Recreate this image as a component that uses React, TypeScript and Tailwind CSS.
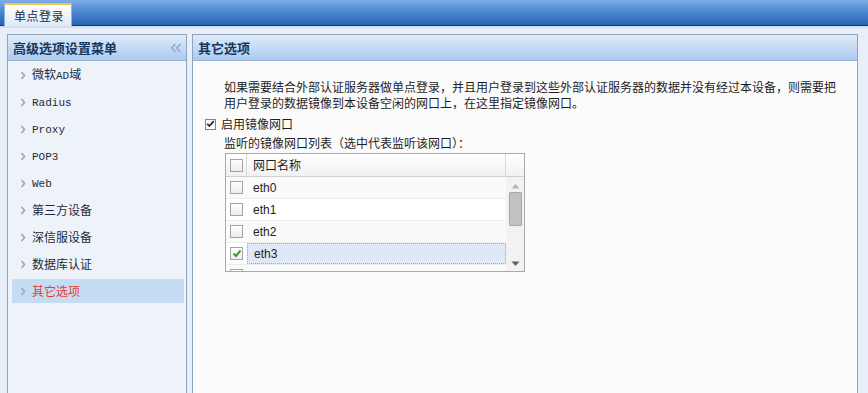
import React from "react";

const cjk = "font-['Noto_Sans_CJK_SC','Noto_Sans',sans-serif]";
const mono = "font-['Liberation_Mono','Noto_Sans_CJK_SC',monospace] text-[11px]";

type MenuItem = { parts: { t: string; latin?: boolean }[]; active?: boolean };

const menu: MenuItem[] = [
  { parts: [{ t: "微软" }, { t: "AD", latin: true }, { t: "域" }] },
  { parts: [{ t: "Radius", latin: true }] },
  { parts: [{ t: "Proxy", latin: true }] },
  { parts: [{ t: "POP3", latin: true }] },
  { parts: [{ t: "Web", latin: true }] },
  { parts: [{ t: "第三方设备" }] },
  { parts: [{ t: "深信服设备" }] },
  { parts: [{ t: "数据库认证" }] },
  { parts: [{ t: "其它选项" }], active: true },
];

const ports = [
  { name: "eth0", checked: false },
  { name: "eth1", checked: false },
  { name: "eth2", checked: false },
  { name: "eth3", checked: true },
  { name: "eth4", checked: false },
];

function Chevron() {
  return (
    <svg width="6" height="9" viewBox="0 0 6 9" className="shrink-0">
      <path d="M1.5 1 L4.5 4.5 L1.5 8" fill="none" stroke="#9aa5b3" strokeWidth="1.6" />
    </svg>
  );
}

function GridCheck({ checked }: { checked: boolean }) {
  return (
    <span className="flex h-[13px] w-[13px] items-center justify-center border border-[#a3a3a3] bg-linear-to-b from-[#ffffff] to-[#ececec]">
      {checked && (
        <svg width="10" height="9" viewBox="0 0 10 9">
          <path d="M1.5 4.5 L4 7 L8.5 1.5" fill="none" stroke="#3c9b32" strokeWidth="2" />
        </svg>
      )}
    </span>
  );
}

function PanelHeader({ title, collapse }: { title: string; collapse?: boolean }) {
  return (
    <div className="flex h-[26px] items-center justify-between border-b border-[#99b2d0] bg-linear-to-b from-[#dfebf8] to-[#abcaef] pl-[5px] pr-[4px]">
      <span className="text-[13px] font-bold text-[#15375f]">{title}</span>
      {collapse && (
        <svg width="12" height="10" viewBox="0 0 12 10">
          <path d="M5.5 1 L1.5 5 L5.5 9 M10.5 1 L6.5 5 L10.5 9" fill="none" stroke="#8ba7c9" strokeWidth="1.4" />
        </svg>
      )}
    </div>
  );
}

export default function App() {
  return (
    <div className={`h-[393px] w-[868px] overflow-hidden bg-[#e8eff8] text-[12px] ${cjk}`}>
      {/* top tab bar */}
      <div className="flex h-[26px] items-end border-b border-[#17396f] bg-linear-to-b from-[#7cade6] via-[#4a86d0] to-[#2b63b3] pl-[4px]">
        <div className="mb-[-1px] flex h-[23px] w-[68px] items-center border-x border-t-2 border-[#8db2e3] border-t-[#f2c447] bg-linear-to-b from-[#ffffff] to-[#dde9f6] pl-[9px] text-[12px] tracking-[0.5px] text-[#1b2b44]">
          单点登录
        </div>
      </div>
      <div className="h-[2px] bg-[#d3e0ef]" />

      <div className="flex h-[365px] pt-[6px] pl-[7px]">
        {/* left menu */}
        <div className="flex w-[180px] flex-col border border-b-0 border-[#8fa3bc] bg-[#eef3f9]">
          <PanelHeader title="高级选项设置菜单" collapse />
          <ul className="flex flex-col gap-[3px] pt-[2px] pr-[2px] pl-[4px]">
            {menu.map((m, i) => (
              <li
                key={i}
                className={`flex h-[24px] items-center gap-[6px] pl-[8px] ${
                  m.active ? "bg-[#c6dcf5] text-[#e2412f]" : "text-[#1f2b3a]"
                }`}
              >
                <Chevron />
                <span className="text-[12px] leading-none">
                  {m.parts.map((p, j) => (
                    <span key={j} className={p.latin ? mono : ""}>
                      {p.t}
                    </span>
                  ))}
                </span>
              </li>
            ))}
          </ul>
        </div>

        <div className="w-[5px]" />

        {/* right content */}
        <div className="flex w-[666px] flex-col border border-b-0 border-[#8fa3bc] bg-[#fbfbfb]">
          <PanelHeader title="其它选项" />
          <div className="pt-[18px] pl-[12px] text-[#1e1e1e]">
            <p className="pl-[19px] leading-[16px] whitespace-nowrap">
              如果需要结合外部认证服务器做单点登录，并且用户登录到这些外部认证服务器的数据并没有经过本设备，则需要把
              <br />
              用户登录的数据镜像到本设备空闲的网口上，在这里指定镜像网口。
            </p>

            <label className="mt-[5px] flex items-center gap-[5px] leading-[16px]">
              <span className="flex h-[11px] w-[11px] items-center justify-center border border-[#7d8592] bg-linear-to-b from-[#f2f2f2] to-[#ffffff]">
                <svg width="9" height="8" viewBox="0 0 9 8">
                  <path d="M1.2 3.8 L3.4 6 L7.8 1.2" fill="none" stroke="#2b2f36" strokeWidth="1.8" />
                </svg>
              </span>
              启用镜像网口
            </label>

            <div className="mt-[3px] pl-[19px] leading-[16px]">监听的镜像网口列表（选中代表监听该网口）：</div>

            {/* grid */}
            <div className="mt-[2px] ml-[20px] h-[119px] w-[300px] overflow-hidden border border-[#a9a9a9] bg-white">
              <div className="flex h-[23px] border-b border-[#d0d0d0] bg-linear-to-b from-[#ffffff] to-[#f1f1f1]">
                <div className="flex w-[21px] items-center justify-center border-r border-[#d9d9d9]">
                  <GridCheck checked={false} />
                </div>
                <div className="flex flex-1 items-center border-r border-[#d9d9d9] pl-[6px] text-[#1e1e1e]">网口名称</div>
                <div className="w-[18px]" />
              </div>
              <div className="flex">
                <div className="flex flex-1 flex-col">
                  {ports.map((p, i) => (
                    <div
                      key={p.name}
                      className={`flex h-[22px] shrink-0 border-b border-[#ededed] ${
                        i % 2 === 0 ? "bg-[#fafafa]" : "bg-white"
                      }`}
                    >
                      <div className="flex w-[21px] items-center justify-center">
                        <GridCheck checked={p.checked} />
                      </div>
                      <div
                        className={`flex flex-1 items-center pl-[6px] font-['Liberation_Sans',sans-serif] text-[12px] text-[#222] ${
                          p.checked ? "border border-dotted border-[#9aa8bd] bg-[#dfe8f6]" : ""
                        }`}
                      >
                        {p.name}
                      </div>
                    </div>
                  ))}
                </div>
                <div className="flex h-[95px] w-[18px] flex-col items-center bg-[#f2f2f2]">
                  <svg width="9" height="6" viewBox="0 0 9 6" className="mt-[6px]">
                    <path d="M0.5 5.5 L4.5 1 L8.5 5.5 Z" fill="#b5b5b5" />
                  </svg>
                  <div className="mt-[3px] h-[34px] w-[13px] rounded-[1px] border border-[#a8a8a8] bg-[#c1c1c1]" />
                  <div className="flex-1" />
                  <svg width="9" height="6" viewBox="0 0 9 6" className="mb-[5px]">
                    <path d="M0.5 0.5 L4.5 5 L8.5 0.5 Z" fill="#606060" />
                  </svg>
                </div>
              </div>
            </div>
          </div>
        </div>
      </div>
    </div>
  );
}
